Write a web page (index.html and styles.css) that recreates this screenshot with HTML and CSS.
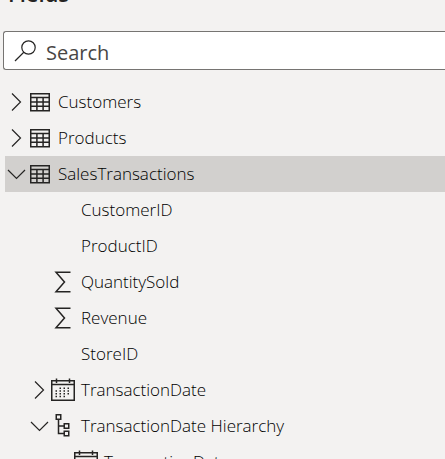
FILE: index.html
```html
<!DOCTYPE html>
<html lang="en">
<head>
<meta charset="utf-8">
<title>Fields</title>
<link rel="stylesheet" href="styles.css">
</head>
<body>
<svg class="sprite" aria-hidden="true">
  <symbol id="right" viewBox="0 0 23 24"><path d="M7 3.500 15.500 12 7 20.500"/></symbol>
  <symbol id="down" viewBox="0 0 23 24"><path d="M3 8 11.500 16.500 20 8"/></symbol>
  <symbol id="table" viewBox="0 0 24 24"><path stroke-width="1.500" d="M2.750 3.750h18.500v17H2.750zM2.750 7.500h18.500M2.750 11.900h18.500M2.750 16.300h18.500M8.900 7.500v13M15.100 7.500v13"/></symbol>
  <symbol id="sum" viewBox="0 0 24 24"><path stroke-width="1.500" d="M19.500 2.200H5L13.500 12 5 21.800H19.500"/></symbol>
  <symbol id="date" viewBox="0 0 24 24"><path stroke-width="1.500" d="M.75 2.750h22.500v19.500H.75zM.75 6.500h22.500M5.500.500v4.500M18.500.500v4.500"/><path stroke-dasharray="1.500 2.500" stroke-width="1.500" d="M8.500 10.250h12M4.500 13h16M4.500 15.750h16M4.500 18.500h12"/></symbol>
  <symbol id="tree" viewBox="0 0 24 24"><path stroke-width="1.500" d="M5.250.750h4.500v4.500h-4.500zM13.250 9.750h4.500v4.500h-4.500zM13.250 17.250h4.500v4.500h-4.500zM7.500 5.250v14.250h5.750M7.500 12h5.750"/></symbol>
</svg>
<main class="pane">
  <h1 class="title">Fields</h1>
  <label class="search">
    <svg class="search-icon" viewBox="0 0 24 24" aria-hidden="true"><circle cx="14.500" cy="8.500" r="6.700"/><path d="M9.800 13.300 1 22"/></svg>
    <input class="search-input" type="search" placeholder="Search" aria-label="Search">
  </label>
  <ul class="list">
    <li><button class="row"><svg class="chevron"><use href="#right"/></svg><svg class="icon"><use href="#table"/></svg><span class="name">Customers</span></button></li>
    <li><button class="row"><svg class="chevron"><use href="#right"/></svg><svg class="icon"><use href="#table"/></svg><span class="name">Products</span></button></li>
    <li>
      <button class="row selected" aria-expanded="true"><svg class="chevron"><use href="#down"/></svg><svg class="icon"><use href="#table"/></svg><span class="name">SalesTransactions</span></button>
      <ul class="list nested">
        <li><button class="row"><span class="chevron"></span><span class="icon"></span><span class="name">CustomerID</span></button></li>
        <li><button class="row"><span class="chevron"></span><span class="icon"></span><span class="name">ProductID</span></button></li>
        <li><button class="row"><span class="chevron"></span><svg class="icon"><use href="#sum"/></svg><span class="name">QuantitySold</span></button></li>
        <li><button class="row"><span class="chevron"></span><svg class="icon"><use href="#sum"/></svg><span class="name">Revenue</span></button></li>
        <li><button class="row"><span class="chevron"></span><span class="icon"></span><span class="name">StoreID</span></button></li>
        <li><button class="row"><svg class="chevron"><use href="#right"/></svg><svg class="icon"><use href="#date"/></svg><span class="name">TransactionDate</span></button></li>
        <li>
          <button class="row" aria-expanded="true"><svg class="chevron"><use href="#down"/></svg><svg class="icon"><use href="#tree"/></svg><span class="name">TransactionDate Hierarchy</span></button>
          <ul class="list nested">
            <li><button class="row"><span class="chevron"></span><svg class="icon"><use href="#date"/></svg><span class="name">TransactionDate</span></button></li>
          </ul>
        </li>
      </ul>
    </li>
  </ul>
</main>
</body>
</html>
```
FILE: styles.css
```css
* {
  box-sizing: border-box;
}

body {
  margin: 0;
  height: 100vh;
  overflow: hidden;
  background: #f3f2f1;
  color: #252423;
  font-family: "Segoe UI", "Open Sans", "Noto Sans", sans-serif;
  font-size: 17px;
}

.sprite {
  position: absolute;
  width: 0;
  height: 0;
}

svg {
  fill: none;
  stroke: #252423;
  stroke-width: 1.2;
}

.pane {
  padding-left: 3px;
}

.title {
  margin: -21px 0 24px 5px;
  font-size: 22px;
  font-weight: 600;
  line-height: 28px;
}

.search {
  display: flex;
  align-items: center;
  gap: 8px;
  height: 39px;
  padding-left: 10px;
  background: #fff;
  border: 1px solid #767472;
  border-right: 0;
  border-radius: 3px 0 0 3px;
}

.search-icon {
  flex: none;
  width: 24px;
  height: 24px;
}

.search-input {
  flex: 1;
  min-width: 0;
  height: 100%;
  padding: 3px 0 0;
  border: 0;
  outline: 0;
  background: none;
  font: inherit;
  font-size: 20px;
}

.search-input::placeholder {
  color: #484644;
  opacity: 1;
}

.list {
  margin: 0;
  padding: 0;
  list-style: none;
}

.pane > .list {
  margin: 14px 0 0 2px;
}

.nested {
  padding-left: 23px;
}

.row {
  display: flex;
  align-items: center;
  width: 100%;
  height: 36px;
  padding: 0;
  border: 0;
  background: none;
  color: #000;
  font: inherit;
  font-weight: 300;
  text-align: left;
  white-space: nowrap;
}

.selected {
  background: #d2d0ce;
}

.chevron {
  flex: none;
  width: 23px;
  height: 24px;
}

.icon {
  flex: none;
  width: 24px;
  height: 24px;
  margin-right: 6px;
}

.name {
  padding-bottom: 1px;
}
```
